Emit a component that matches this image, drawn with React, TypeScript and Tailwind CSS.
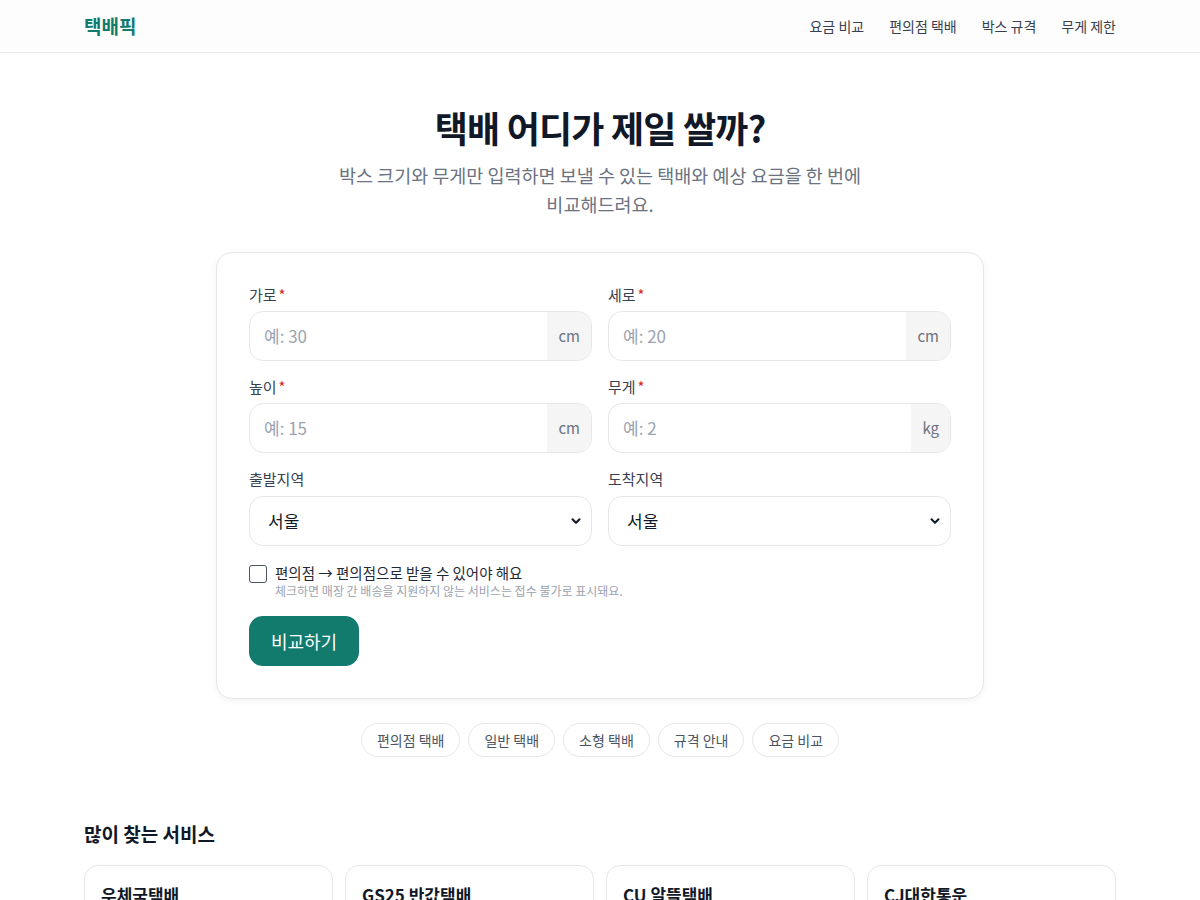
import { ChevronDown } from "lucide-react";

const font = { fontFamily: '"Noto Sans CJK KR", "Noto Sans", sans-serif' };

const navLinks = ["요금 비교", "편의점 택배", "박스 규격", "무게 제한"];
const pills = ["편의점 택배", "일반 택배", "소형 택배", "규격 안내", "요금 비교"];
const services = ["우체국택배", "GS25 반값택배", "CU 알뜰택배", "CJ대한통운"];

function NumberField({ label, placeholder, unit }: { label: string; placeholder: string; unit: string }) {
  return (
    <div className="flex flex-col">
      <label className="text-[15px] leading-[18px] text-[#374151] mb-[7px]">
        {label}
        <span className="text-[#dc2626] ml-[2px]">*</span>
      </label>
      <div className="flex h-[50px] rounded-[14px] border border-[#e5e7eb] overflow-hidden bg-white">
        <input
          placeholder={placeholder}
          className="flex-1 min-w-0 px-[14px] text-[17px] text-[#111827] placeholder:text-[#9ca3af] outline-none bg-transparent"
          style={font}
        />
        <span className="flex items-center justify-center px-[11px] bg-[#f5f5f5] text-[15px] text-[#6b7280]">{unit}</span>
      </div>
    </div>
  );
}

function SelectField({ label }: { label: string }) {
  return (
    <div className="flex flex-col">
      <label className="text-[15px] leading-[18px] text-[#374151] mb-[8px]">{label}</label>
      <div className="relative flex h-[50px] items-center rounded-[14px] border border-[#e5e7eb] bg-white px-[18px]">
        <span className="text-[17px] text-[#111827]">서울</span>
        <ChevronDown className="absolute right-[8px] w-[14px] h-[14px] text-[#111827]" strokeWidth={3.5} />
      </div>
    </div>
  );
}

export default function App() {
  return (
    <div className="min-h-screen bg-white text-[#111827]" style={font}>
      <header className="h-[53px] border-b border-[#ececec] bg-[#fdfdfd]">
        <div className="mx-auto flex h-full w-[1032px] items-center justify-between">
          <span className="text-[19px] font-bold text-[#137a6e]">택배픽</span>
          <nav className="flex items-center gap-[25px] text-[14px] text-[#374151]">
            {navLinks.map((n) => (
              <span key={n}>{n}</span>
            ))}
          </nav>
        </div>
      </header>

      <main className="mx-auto w-[1032px]">
        <section className="flex flex-col items-center pt-[47px]">
          <h1 className="text-[36px] font-bold leading-[54px] tracking-[-0.8px] text-[#111827]">택배 어디가 제일 쌀까?</h1>
          <p className="mt-[7px] w-[540px] text-center text-[18.5px] leading-[29px] text-[#6b7280]">
            박스 크기와 무게만 입력하면 보낼 수 있는 택배와 예상 요금을 한 번에 비교해드려요.
          </p>
        </section>

        <div className="mx-auto mt-[33px] w-[768px] rounded-[16px] border border-[#e5e7eb] bg-white px-[32px] pt-[33px] pb-[32px] shadow-[0_2px_6px_rgba(0,0,0,0.06)]">
          <div className="grid grid-cols-2 gap-x-[16px] gap-y-[17px]">
            <NumberField label="가로" placeholder="예: 30" unit="cm" />
            <NumberField label="세로" placeholder="예: 20" unit="cm" />
            <NumberField label="높이" placeholder="예: 15" unit="cm" />
            <NumberField label="무게" placeholder="예: 2" unit="kg" />
            <SelectField label="출발지역" />
            <SelectField label="도착지역" />
          </div>

          <div className="mt-[18px] flex items-start gap-[8px]">
            <span className="mt-[1px] h-[18px] w-[18px] rounded-[3px] border-[1.5px] border-[#4b5563] bg-white" />
            <div className="flex flex-col">
              <span className="text-[14.5px] leading-[18px] text-[#1f2937]">편의점 → 편의점으로 받을 수 있어야 해요</span>
              <span className="text-[12px] leading-[17px] text-[#9ca3af]">체크하면 매장 간 배송을 지원하지 않는 서비스는 접수 불가로 표시돼요.</span>
            </div>
          </div>

          <button className="mt-[17px] h-[50px] w-[110px] rounded-[14px] bg-[#137a6e] text-[18px] text-white" style={font}>
            비교하기
          </button>
        </div>

        <div className="mt-[24px] flex justify-center gap-[8px]">
          {pills.map((p) => (
            <span
              key={p}
              className="flex h-[34px] items-center rounded-full border border-[#e5e7eb] px-[15px] text-[14px] text-[#4b5563]"
            >
              {p}
            </span>
          ))}
        </div>

        <section className="mt-[63px]">
          <h2 className="text-[19px] font-bold leading-[28px] text-[#111827]">많이 찾는 서비스</h2>
          <div className="mt-[17px] grid grid-cols-4 gap-[12px]">
            {services.map((s) => (
              <div key={s} className="h-[120px] rounded-[14px] border border-[#e5e7eb] bg-white px-[16px] pt-[16px]">
                <span className="text-[17px] font-bold text-[#111827]">{s}</span>
              </div>
            ))}
          </div>
        </section>
      </main>
    </div>
  );
}
